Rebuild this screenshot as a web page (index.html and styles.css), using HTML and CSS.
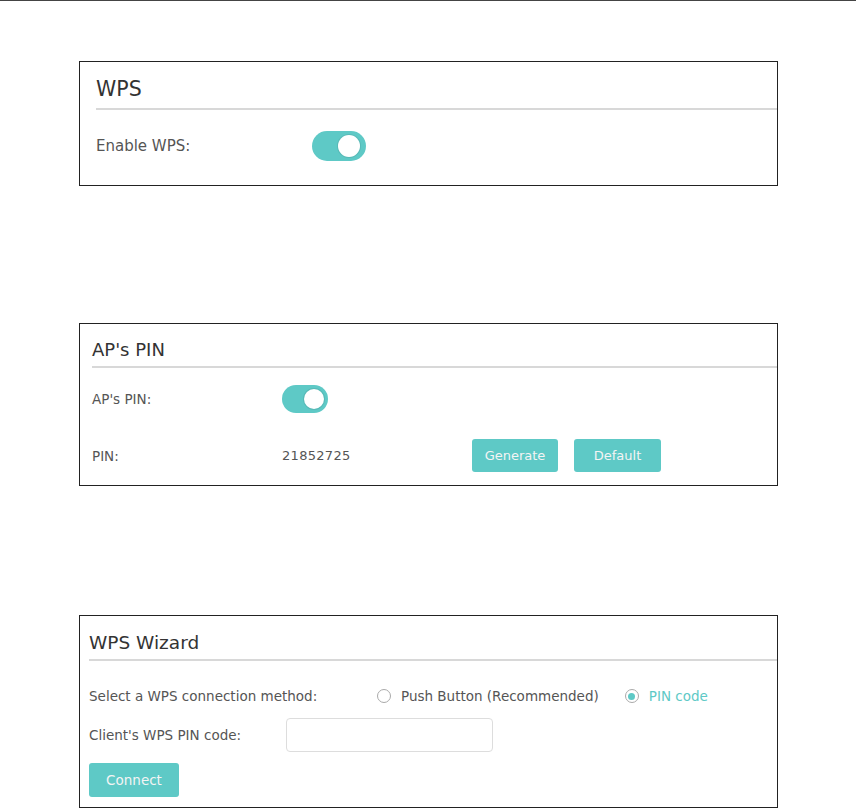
FILE: index.html
```html
<!DOCTYPE html>
<html>
<head>
<meta charset="utf-8">
<link rel="stylesheet" href="styles.css">
</head>
<body>
<div class="page">
  <section class="card card-wps">
    <h2 class="card-title">WPS</h2>
    <div class="row">
      <span class="label">Enable WPS:</span>
      <span class="toggle toggle-lg"><span class="knob"></span></span>
    </div>
  </section>

  <section class="card card-pin">
    <h2 class="card-title">AP's PIN</h2>
    <div class="row row-toggle">
      <span class="label">AP's PIN:</span>
      <span class="toggle toggle-sm"><span class="knob"></span></span>
    </div>
    <div class="row row-pin">
      <span class="label">PIN:</span>
      <span class="pin-value">21852725</span>
      <button class="btn btn-gen">Generate</button>
      <button class="btn btn-def">Default</button>
    </div>
  </section>

  <section class="card card-wizard">
    <h2 class="card-title">WPS Wizard</h2>
    <div class="row row-method">
      <span class="label">Select a WPS connection method:</span>
      <span class="radio"><span class="dot"></span></span>
      <span class="radio-text">Push Button (Recommended)</span>
      <span class="radio checked"><span class="dot"></span></span>
      <span class="radio-text active">PIN code</span>
    </div>
    <div class="row row-client">
      <span class="label">Client's WPS PIN code:</span>
      <span class="input"></span>
    </div>
    <button class="btn btn-connect">Connect</button>
  </section>
</div>
</body>
</html>
```

FILE: styles.css
```css
html, body {
  margin: 0;
  padding: 0;
  background: #fff;
}
body {
  font-family: "DejaVu Sans", Verdana, sans-serif;
  color: #555;
}
.page {
  border-top: 1px solid #444;
  height: 807px;
  display: flex;
  flex-direction: column;
  padding-left: 79px;
}
.card {
  box-sizing: border-box;
  width: 699px;
  border: 1px solid #222;
  display: flex;
  flex-direction: column;
}
.card-title {
  margin: 0;
  font-weight: normal;
  color: #333;
  border-bottom: 2px solid #d8d8d8;
}
.row {
  display: flex;
  align-items: center;
}
.label {
  flex: none;
}

/* card 1 */
.card-wps {
  margin-top: 60px;
  height: 125px;
  padding-left: 16px;
}
.card-wps .card-title {
  font-size: 20.5px;
  line-height: 24px;
  padding-top: 15px;
  height: 31px;
}
.card-wps .row {
  margin-top: 21px;
  font-size: 15px;
}
.card-wps .label { width: 216px; }

/* toggle */
.toggle {
  display: flex;
  align-items: center;
  justify-content: flex-end;
  background: #5ec9c6;
  box-sizing: border-box;
}
.toggle .knob {
  display: block;
  background: #fff;
  border-radius: 50%;
  box-shadow: 0 0 0 1px rgba(0,0,0,0.08);
}
.toggle-lg {
  width: 54px;
  height: 30px;
  border-radius: 15px;
  padding-right: 6px;
}
.toggle-lg .knob { width: 22px; height: 22px; }
.toggle-sm {
  width: 46px;
  height: 28px;
  border-radius: 14px;
  padding-right: 4px;
}
.toggle-sm .knob { width: 20px; height: 20px; }

/* card 2 */
.card-pin {
  margin-top: 137px;
  height: 163px;
  padding-left: 12px;
}
.card-pin .card-title {
  font-size: 18px;
  line-height: 22px;
  padding-top: 15px;
  height: 27px;
}
.card-pin .row { font-size: 13.5px; }
.card-pin .label { width: 190px; }
.row-toggle { margin-top: 17px; }
.row-pin { margin-top: 26px; }
.pin-value {
  width: 190px;
  flex: none;
  font-size: 13px;
  letter-spacing: 0.3px;
}
.btn {
  border: none;
  background: #5ec9c6;
  color: #f4f4f4;
  font-family: inherit;
  border-radius: 3px;
  padding: 0;
  cursor: pointer;
}
.btn-gen { width: 86px; height: 33px; font-size: 13px; }
.btn-def { width: 87px; height: 33px; font-size: 13px; margin-left: 16px; }

/* card 3 */
.card-wizard {
  margin-top: 129px;
  height: 193px;
  padding-left: 9px;
}
.card-wizard .card-title {
  font-size: 18.5px;
  line-height: 24px;
  padding-top: 15px;
  height: 28px;
}
.card-wizard .row { font-size: 13.5px; }
.row-method { margin-top: 23px; height: 24px; }
.row-method .label { width: 288px; }
.radio {
  flex: none;
  width: 12px;
  height: 12px;
  border: 1px solid #aaa;
  border-radius: 50%;
  display: flex;
  align-items: center;
  justify-content: center;
}
.radio.checked .dot {
  width: 7px;
  height: 7px;
  border-radius: 50%;
  background: #5ec9c6;
}
.radio-text {
  margin-left: 10px;
  margin-right: 26px;
}
.radio-text.active { color: #5ec9c6; }
.row-client { margin-top: 10px; }
.row-client .label { width: 197px; }
.input {
  box-sizing: border-box;
  width: 207px;
  height: 34px;
  border: 1px solid #ddd;
  border-radius: 4px;
}
.btn-connect {
  margin-top: 11px;
  width: 90px;
  height: 34px;
  font-size: 13.5px;
}
```
